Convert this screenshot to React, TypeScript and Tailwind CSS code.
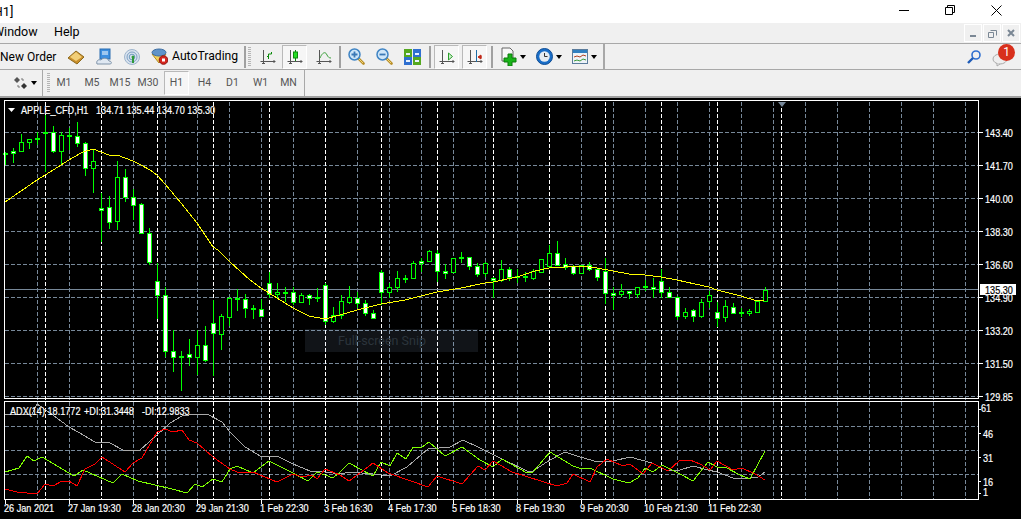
import React from 'react';

type Candle = [number, number, number, number, number, number];
// x, high, low, body top, body bottom, fill (1 white, 0 black, 2 doji)
const candles: Candle[] = [
  [5,152,165,153,155,2],[13,148,163,151,153,1],[21,134,152,142,151,0],[29,139,149,139,142,0],[37,132,145,138,140,2],[45,115,172,132,134,2],
  [53,126,153,132,151,1],[61,132,165,135,151,0],[69,128,150,135,137,2],[77,122,147,136,143,1],[85,142,176,143,168,1],[93,150,193,161,168,0],
  [101,193,242,208,210,1],[109,196,229,207,222,1],[117,161,230,177,221,0],[125,169,202,177,197,1],[133,189,220,197,205,1],[141,203,233,204,233,1],
  [149,228,265,233,262,1],[157,263,319,281,295,1],[165,287,357,295,351,1],[173,330,372,351,357,1],[181,351,391,356,358,2],[189,339,366,354,357,1],
  [197,330,375,345,357,0],[205,326,362,345,360,1],[213,300,376,323,333,1],[221,314,350,316,334,0],[229,297,326,298,317,0],[237,289,311,298,300,2],
  [245,294,318,299,308,1],[253,305,319,308,309,2],[261,299,316,309,316,1],[269,272,298,283,294,1],[277,283,298,292,294,0],[285,287,302,292,293,2],
  [293,287,305,292,302,1],[301,293,303,295,302,0],[309,294,305,295,298,1],[317,288,302,297,299,2],[325,283,325,285,321,1],[333,307,323,315,321,0],
  [341,295,319,301,315,0],[349,286,304,297,302,0],[357,292,308,298,303,1],[365,300,316,303,313,1],[373,310,319,313,318,1],[381,270,305,272,292,1],
  [389,283,298,287,292,0],[397,271,292,278,287,0],[405,275,283,278,280,2],[413,261,279,263,278,0],[421,258,272,261,263,1],[429,250,261,251,261,0],
  [437,250,282,253,271,1],[445,264,279,271,273,1],[453,258,273,258,272,0],[461,252,263,257,259,2],[469,257,270,257,266,1],[477,263,277,266,274,1],
  [485,262,277,263,273,0],[493,277,298,278,280,1],[501,260,282,269,280,0],[509,267,281,269,277,1],[517,269,283,276,277,2],[525,272,282,276,278,2],
  [533,269,280,271,278,0],[541,259,273,259,272,0],[549,245,268,253,266,0],[557,241,266,253,265,1],[565,258,270,264,267,1],[573,265,275,266,273,1],
  [581,265,274,265,273,0],[589,262,271,265,269,1],[597,268,281,269,277,1],[605,258,304,271,293,1],[613,287,310,293,295,1],[621,284,297,291,294,0],
  [629,291,299,291,293,1],[637,287,298,287,294,0],[645,280,291,286,288,2],[653,278,298,287,289,1],[661,269,298,281,292,1],[669,287,298,292,297,1],
  [677,296,320,297,316,1],[685,308,319,312,316,0],[693,309,322,310,316,1],[701,299,318,302,316,0],[709,291,308,295,301,0],[717,302,327,312,318,1],
  [725,300,322,306,317,0],[733,303,313,307,313,1],[741,308,317,312,314,2],[749,309,316,311,313,0],[757,301,312,301,312,0],[765,287,302,290,301,0],
];

const maLine = '5,202 21,191 37,180 50,172 61,165 72,158 83,152 93,149 101,152 109,155 117,155 125,158 133,161 141,165 150,170 157,175 165,184 181,203 197,223 213,247 218,250 230,262 250,280 261,288 277,298 293,308 309,316 325,319 340,315 357,310 381,304 405,300 421,296 437,292 461,288 485,283 493,282 517,277 535,271 549,268 557,267 565,267 581,266 597,268 613,271 629,274 645,275 661,277 677,280 695,284 709,287 717,290 741,296 757,301 764,300';
const adxLine = '5,414 32,414 37,404 53,415 69,427 78,432 95,442 108,442 125,451 140,450 157,435 170,423 182,416 197,414 207,414 222,422 230,432 245,447 262,457 277,456 293,464 310,471 325,472 340,474 350,472 373,474 390,476 407,467 428,449 450,447 463,440 480,448 500,458 527,471 533,471 550,460 565,452 580,457 598,462 613,461 630,457 652,463 668,471 680,470 693,466 708,470 717,472 733,478 750,478 758,477 765,472';
const plusLine = '5,472 19,468 27,456 34,461 42,457 74,476 83,470 113,483 122,474 138,481 172,489 187,493 195,484 202,487 213,479 222,482 230,469 237,466 253,473 269,461 293,473 308,481 317,472 333,478 340,472 349,463 373,476 381,462 390,466 397,453 406,459 413,447 421,448 429,442 445,456 462,447 480,460 493,467 502,459 527,473 533,472 550,452 573,466 582,469 590,468 613,479 629,483 638,478 645,468 653,472 662,465 680,474 693,481 708,462 717,467 725,467 740,475 750,479 765,451';
const minusLine = '5,489 17,492 37,494 45,484 53,486 62,481 69,481 77,486 85,469 95,464 102,457 125,472 133,463 142,458 157,432 165,429 173,432 182,430 189,440 197,443 213,457 230,469 237,472 253,472 277,482 293,474 302,477 312,475 317,479 325,469 340,475 349,481 360,473 373,463 388,473 428,487 437,476 462,484 478,466 485,470 493,461 512,472 557,486 567,483 573,474 590,482 597,467 607,459 623,466 630,464 643,474 652,463 668,471 680,460 690,460 700,464 710,470 717,461 733,470 742,468 755,474 765,480';

const whiteX = [45, 101, 157, 213, 269, 325, 381, 437, 493, 549, 605, 661, 717, 781];
const grayX = [37, 69, 133, 165, 197, 229, 261, 293, 357, 389, 421, 453, 485, 517, 581, 613, 645, 677, 709, 741, 773, 805, 837, 869, 901, 933, 965];
const priceY = [132, 165, 198, 231, 264, 297, 330, 363, 396];
const priceLabels = ['143.40', '141.70', '140.00', '138.30', '136.60', '134.90', '133.20', '131.50', '129.85'];
const adxY = [426, 450, 474];
const adxLabels: [string, number, number][] = [['61', 981, 412], ['46', 983, 438], ['31', 983, 462], ['16', 983, 486], ['1', 983, 496]];
const timeLabels = ['26 Jan 2021', '27 Jan 19:30', '28 Jan 20:30', '29 Jan 21:30', '1 Feb 22:30', '3 Feb 16:30', '4 Feb 17:30', '5 Feb 18:30', '8 Feb 19:30', '9 Feb 20:30', '10 Feb 21:30', '11 Feb 22:30'];

function T({ x, y, children, fill = '#fff' }: { x: number; y: number; children: React.ReactNode; fill?: string }) {
  return (
    <text transform={`translate(${x} ${y}) scale(0.83 1)`} fill={fill} stroke={fill} strokeWidth="0.2" fontSize="11" fontFamily="'Liberation Sans', sans-serif" xmlSpace="preserve">
      {children}
    </text>
  );
}

function Chart() {
  return (
    <svg width="1021" height="421" viewBox="0 98 1021 421" className="block bg-black">
      <g shapeRendering="crispEdges" fill="none">
        {priceY.map(y => <line key={y} x1="5" x2="978" y1={y + 0.5} y2={y + 0.5} stroke="#778899" strokeDasharray="4 2" />)}
        {adxY.map(y => <line key={y} x1="5" x2="978" y1={y + 0.5} y2={y + 0.5} stroke="#778899" strokeDasharray="4 2" />)}
        {grayX.map(x => <line key={x} x1={x + 0.5} x2={x + 0.5} y1="102" y2="499" stroke="#778899" strokeDasharray="4 2" />)}
        {whiteX.map(x => <line key={x} x1={x + 0.5} x2={x + 0.5} y1="102" y2="499" stroke="#fff" strokeDasharray="4 2" />)}
        <line x1="5" x2="978" y1="289.5" y2="289.5" stroke="#778899" />

        <rect x="305" y="329" width="173" height="23" fill="#a8c8e8" fillOpacity="0.1" stroke="none" />

        {candles.map(([x, hi, lo, top, bot, fill]) => (
          <g key={x}>
            <line x1={x + 0.5} x2={x + 0.5} y1={hi} y2={lo} stroke="#00ff00" />
            {fill === 2 ? (
              <rect x={x - 2} y={top} width="5" height="2" fill="#00ff00" />
            ) : (
              <rect x={x - 1.5} y={top + 0.5} width="4" height={bot - top} fill={fill === 1 ? '#fff' : '#000'} stroke="#00ff00" />
            )}
          </g>
        ))}

        <polyline points={maLine} stroke="#ffff00" />
        <polyline points={adxLine} stroke="#a9a9a9" />
        <polyline points={plusLine} stroke="#7fff00" />
        <polyline points={minusLine} stroke="#ff0000" />

        <rect x="4.5" y="100.5" width="974" height="298" stroke="#fff" />
        <rect x="4.5" y="401.5" width="974" height="98" stroke="#fff" />
        {priceY.map(y => <line key={y} x1="979" x2="983" y1={y + 0.5} y2={y + 0.5} stroke="#fff" />)}
        {[409, 433, 457, 481, 493].map(y => <line key={y} x1="979" x2="981" y1={y + 0.5} y2={y + 0.5} stroke="#fff" />)}
        {timeLabels.map((_, i) => <line key={i} x1={5.5 + i * 64} x2={5.5 + i * 64} y1="500" y2="504" stroke="#fff" />)}
      </g>

      <path d="M8 108h7l-3.5 4z" fill="#fff" />
      <path d="M778 102h8l-4 5z" fill="#778899" />

      <T x={21} y={114}>APPLE_CFD,H1</T>
      <T x={96} y={114}>134.71 135.44 134.70 135.30</T>
      <T x={10} y={415}>ADX(14) 18.1772</T>
      <T x={84} y={415}>+DI:31.3448</T>
      <T x={142} y={415}>-DI:12.9833</T>

      <text x="338" y="345" fill="#2c343c" fontSize="12.5" fontFamily="Roboto, sans-serif">Full-screen Snip</text>

      {priceLabels.map((p, i) => <T key={p} x={985} y={priceY[i] + 5}>{p}</T>)}
      <rect x="980" y="284" width="36" height="11" fill="#fff" />
      <T x={985} y={294} fill="#000">135.30</T>
      {adxLabels.map(([l, x, y]) => <T key={l} x={x} y={y}>{l}</T>)}
      {timeLabels.map((l, i) => <T key={l} x={4 + i * 64} y={512}>{l}</T>)}
    </svg>
  );
}

function Grip() {
  return <div className="h-[20px] w-[3px] bg-[repeating-linear-gradient(#b5b5b5_0_1px,transparent_1px_2px)]" />;
}

function Sep() {
  return <div className="h-[22px] w-[2px] bg-[#a0a0a0]" />;
}

function Caret() {
  return <div className="h-0 w-0 border-x-[3.5px] border-t-[4px] border-x-transparent border-t-black" />;
}

function Axes({ children }: { children: React.ReactNode }) {
  return (
    <svg width="16" height="16" viewBox="0 0 16 16" fill="none">
      <path d="M3.5 1v13M.5 12.5h15" stroke="#555" />
      <path d="M2 14.5h3M14 11v3" stroke="#555" />
      {children}
    </svg>
  );
}

function ToggleBtn({ children }: { children: React.ReactNode }) {
  return (
    <div className="flex h-[24px] w-[25px] items-center justify-center border border-[#b9b9b9] border-r-white border-b-white bg-[#f6f6f6]">
      {children}
    </div>
  );
}

function Mag({ minus }: { minus?: boolean }) {
  return (
    <svg width="17" height="17" viewBox="0 0 17 17">
      <path d="M10 10l5.5 5.5" stroke="#b98f2a" strokeWidth="2.6" strokeLinecap="round" />
      <path d="M10.5 10.5l4.5 4.5" stroke="#f0d676" strokeWidth="1" />
      <circle cx="6.5" cy="6.5" r="5.5" fill="#cfe6f8" stroke="#3f84c4" strokeWidth="1.5" />
      <path d={minus ? 'M3.5 6.5h6' : 'M3.5 6.5h6M6.5 3.5v6'} stroke="#3b79b6" strokeWidth="1.8" />
    </svg>
  );
}

export default function App() {
  return (
    <div className="h-[519px] w-[1021px] overflow-hidden bg-[#f0f0f0] font-['Roboto',sans-serif] text-[12px] text-black">
      {/* title bar */}
      <div className="flex h-[23px] items-center justify-between bg-white">
        <span className="ml-[-10px] text-[13px] leading-none">[H1]</span>
        <div className="mb-[3px] mr-[2px] flex items-center">
          <div className="flex w-[46px] justify-center"><div className="h-px w-[10px] bg-black" /></div>
          <div className="flex w-[46px] justify-center">
            <svg width="10" height="10" viewBox="0 0 10 10" fill="none" stroke="#000"><path d="M.5 2.5h7v7h-7zM2.5 2.5v-2h7v7h-2" /></svg>
          </div>
          <div className="flex w-[46px] justify-center">
            <svg width="11" height="11" viewBox="0 0 11 11" stroke="#000"><path d="M.5.5l10 10M10.5.5l-10 10" /></svg>
          </div>
        </div>
      </div>

      {/* menu bar */}
      <div className="flex h-[20px] items-center">
        <span className="ml-[-7px] mb-[2px] w-[61px] text-[12.5px]">Window</span>
        <span className="mb-[2px] text-[12.5px]">Help</span>
        <div className="ml-auto mr-[1px] flex gap-px">
          <div className="flex h-[18px] w-[18px] items-center justify-center border border-white"><div className="mt-[6px] h-[2px] w-[6px] bg-[#7a8794]" /></div>
          <div className="flex h-[18px] w-[18px] items-center justify-center border border-white">
            <svg width="9" height="9" viewBox="0 0 9 9" fill="none" stroke="#7a8794"><path d="M.5 3.5h5v5h-5zM2.5 1.5h6v5" /></svg>
          </div>
          <div className="flex h-[18px] w-[18px] items-center justify-center border border-white">
            <svg width="8" height="8" viewBox="0 0 8 8" stroke="#7a8794" strokeWidth="2"><path d="M1 1l6 6M7 1l-6 6" /></svg>
          </div>
        </div>
      </div>

      {/* main toolbar */}
      <div className="flex h-[27px] items-center border-y border-[#a8a8a8]">
        <span className="w-[68px] text-[12px]">New Order</span>
        <svg width="16" height="16" viewBox="0 0 16 16">
          <path d="M0 9l8-7 8 6-7 7z" fill="#c98f2c" stroke="#8c6a1e" />
          <path d="M2 8l6-5 6 5-6 4z" fill="#f2cf78" />
        </svg>
        <svg className="ml-[12px]" width="16" height="17" viewBox="0 0 16 17">
          <rect x="4" y="1" width="10" height="10" fill="#3d8fe0" stroke="#2b6cb0" />
          <path d="M6 4h6M6 6h6" stroke="#fff" />
          <path d="M1 16c-1-3 1-5 4-4 2-3 7-2 8 1 3 0 3 3 1 3z" fill="#dfe8f2" stroke="#7f93a8" />
        </svg>
        <svg className="ml-[12px]" width="16" height="16" viewBox="0 0 16 16" fill="none">
          <circle cx="8" cy="8" r="7.5" fill="#d8e2ee" stroke="#9db4cc" />
          <circle cx="8" cy="8" r="5" stroke="#7da0c4" />
          <circle cx="8" cy="8" r="2.8" stroke="#6f9abf" />
          <path d="M9 8v6" stroke="#2f9a3a" strokeWidth="2" />
          <circle cx="9" cy="8" r="1.5" fill="#2f9a3a" />
        </svg>
        <svg className="ml-[11px]" width="17" height="17" viewBox="0 0 17 17">
          <path d="M1 6l7 9 7-9z" fill="#f3d25a" stroke="#b08a22" />
          <ellipse cx="8" cy="4.5" rx="7" ry="3.5" fill="#5f93c9" stroke="#3e6ea2" />
          <circle cx="12.5" cy="12" r="4.3" fill="#d7261e" stroke="#8c1410" />
          <rect x="11" y="10.5" width="3" height="3" fill="#fff" />
        </svg>
        <span className="ml-[4px] w-[72px] text-[12.2px]">AutoTrading</span>
        <Sep />
        <div className="ml-[2px] mr-[9px]"><Grip /></div>
        <Axes><path d="M8.5 10V5h3" stroke="#0a8a0a" /><path d="M7 7.5h1M11.5 5V3" stroke="#0a8a0a" /></Axes>
        <div className="ml-[6px]">
          <ToggleBtn><Axes><path d="M8.5 1v11" stroke="#0a8a0a" /><rect x="6.5" y="3" width="4" height="6" fill="#22dd22" stroke="#0a8a0a" /></Axes></ToggleBtn>
        </div>
        <div className="ml-[9px]">
          <Axes><path d="M4 9c3-7 6-6 7-3 1 2 2 3 4 3" stroke="#3aa03a" /></Axes>
        </div>
        <div className="ml-[7px]"><Sep /></div>
        <div className="ml-[7px]"><Mag /></div>
        <div className="ml-[11px]"><Mag minus /></div>
        <svg className="ml-[11px]" width="17" height="16" viewBox="0 0 17 16">
          <rect x="0" y="0" width="8" height="8" fill="#55a820" /><rect x="9" y="0" width="8" height="8" fill="#2f6fd0" />
          <rect x="0" y="8" width="8" height="8" fill="#2f6fd0" /><rect x="9" y="8" width="8" height="8" fill="#55a820" />
          <path d="M2 4h4v2H2zM11 4h4v2h-4zM2 11h4v2H2zM11 11h4v2h-4z" fill="#e8f2ff" />
        </svg>
        <div className="ml-[8px] mr-[3px]"><Sep /></div>
        <ToggleBtn><Axes><path d="M9.5 4v7l4-3.5z" fill="#cfeecf" stroke="#2aa02a" /></Axes></ToggleBtn>
        <div className="ml-[3px]">
          <ToggleBtn><Axes><path d="M9.5 1v12" stroke="#1e6ea8" /><path d="M15 8h-3M11 8l3-2v4z" fill="#c02818" stroke="#c02818" /></Axes></ToggleBtn>
        </div>
        <div className="ml-[4px] mr-[8px]"><Sep /></div>
        <svg width="17" height="19" viewBox="0 0 17 19">
          <path d="M1 1h8l3 3v10H1z" fill="#f8f8f8" stroke="#666" />
          <path d="M7 7h4v4h4v4h-4v4H7v-4H3v-4h4z" fill="#19b319" stroke="#0a7a0a" />
        </svg>
        <div className="ml-[2px]"><Caret /></div>
        <svg className="ml-[10px]" width="17" height="17" viewBox="0 0 17 17">
          <circle cx="8.5" cy="8.5" r="8" fill="#1a6ec8" stroke="#0f4d94" />
          <circle cx="8.5" cy="8.5" r="5.2" fill="#e6ecf2" />
          <path d="M8.5 5v3.5h3" stroke="#333" fill="none" />
        </svg>
        <div className="ml-[3px]"><Caret /></div>
        <svg className="ml-[10px]" width="16" height="15" viewBox="0 0 16 15">
          <rect x=".5" y=".5" width="15" height="14" fill="#eef3f8" stroke="#5b7c9c" />
          <rect x="1" y="1" width="14" height="3" fill="#2f7fc0" />
          <path d="M2 8l3-1 3 1 3-2 3 1" stroke="#b04020" fill="none" />
          <path d="M2 12l3-1 3 1 3-2 3 1" stroke="#3a9a3a" fill="none" />
        </svg>
        <div className="ml-[3px]"><Caret /></div>
        <div className="ml-[6px] h-[25px] w-[2px] bg-[#a8a8a8]" />
        <div className="ml-auto mr-[13px] flex items-center gap-[11px]">
          <svg width="14" height="14" viewBox="0 0 14 14" fill="none">
            <circle cx="9" cy="5" r="4" stroke="#2f6fd0" strokeWidth="1.6" />
            <path d="M6 8l-5 5" stroke="#1f5cb8" strokeWidth="2.4" />
          </svg>
          <div className="relative mt-[6px] h-[14px] w-[16px]">
            <svg width="16" height="14" viewBox="0 0 16 14"><ellipse cx="8" cy="6" rx="7" ry="5" fill="#eee" stroke="#aaa" /><path d="M5 10v3l3-2" fill="#eee" stroke="#aaa" /></svg>
            <div className="absolute left-[6px] top-[-9px] flex h-[17px] w-[17px] items-center justify-center rounded-full bg-[#d8301c] text-[12px] leading-none text-white">1</div>
          </div>
        </div>
      </div>

      {/* timeframe toolbar */}
      <div className="flex h-[26px] items-center text-[10.5px] text-[#555]">
        <svg className="ml-[13px]" width="15" height="14" viewBox="0 0 15 14">
          <path d="M4 1l3 3-3 3-3-3z" fill="#555" />
          <path d="M11 7l3 3-3 3-3-3z" fill="#333" />
          <path d="M8 3h2M10 3v2M5 9v2h2" stroke="#777" fill="none" />
        </svg>
        <div className="ml-[3px]"><Caret /></div>
        <div className="ml-[5px] h-[26px] w-px bg-[#a8a8a8]" />
        <div className="ml-[4px]"><Grip /></div>
        {['M1', 'M5', 'M15', 'M30'].map(l => <span key={l} className="flex w-[28px] justify-center">{l}</span>)}
        <span className="ml-[2px] flex h-[24px] w-[25px] items-center justify-center border border-[#b9b9b9] border-r-white border-b-white bg-[#f6f6f6]">H1</span>
        <div className="ml-[1.5px] flex">
          {['H4', 'D1', 'W1', 'MN'].map(l => <span key={l} className="flex w-[28px] justify-center">{l}</span>)}
        </div>
        <div className="ml-[1.5px] h-[26px] w-px bg-[#a8a8a8]" />
      </div>

      <div className="h-[2px] bg-[#a0a0a0]" />
      <Chart />
    </div>
  );
}
